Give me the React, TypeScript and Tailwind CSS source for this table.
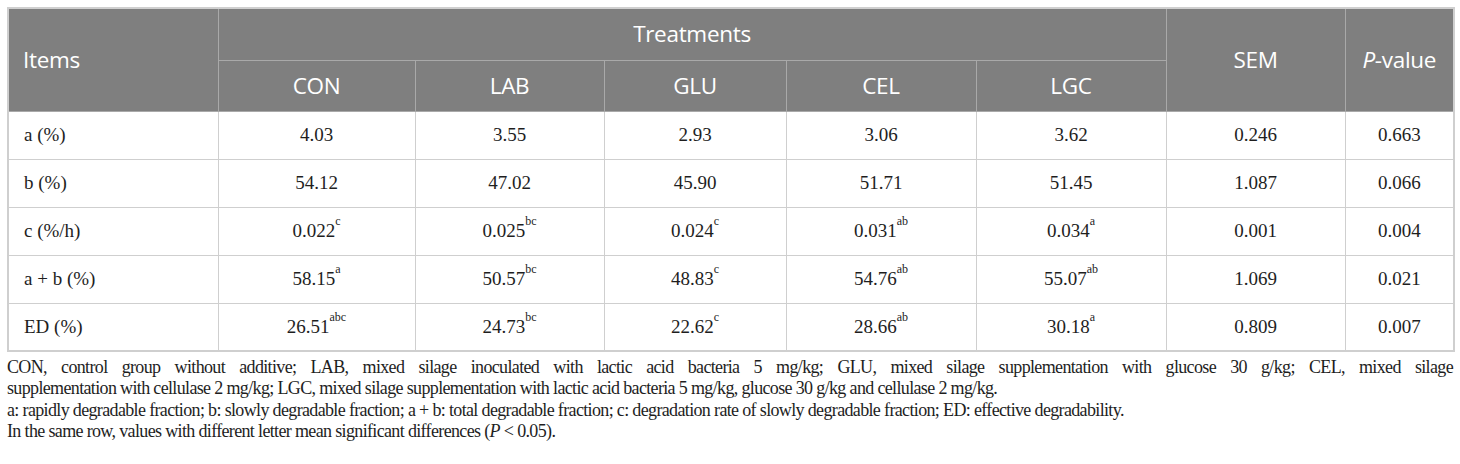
type Cell = { v: string; s?: string };

const rows: { item: string; cells: Cell[]; sem: string; p: string }[] = [
  {
    item: 'a (%)',
    cells: [{ v: '4.03' }, { v: '3.55' }, { v: '2.93' }, { v: '3.06' }, { v: '3.62' }],
    sem: '0.246',
    p: '0.663',
  },
  {
    item: 'b (%)',
    cells: [{ v: '54.12' }, { v: '47.02' }, { v: '45.90' }, { v: '51.71' }, { v: '51.45' }],
    sem: '1.087',
    p: '0.066',
  },
  {
    item: 'c (%/h)',
    cells: [
      { v: '0.022', s: 'c' },
      { v: '0.025', s: 'bc' },
      { v: '0.024', s: 'c' },
      { v: '0.031', s: 'ab' },
      { v: '0.034', s: 'a' },
    ],
    sem: '0.001',
    p: '0.004',
  },
  {
    item: 'a + b (%)',
    cells: [
      { v: '58.15', s: 'a' },
      { v: '50.57', s: 'bc' },
      { v: '48.83', s: 'c' },
      { v: '54.76', s: 'ab' },
      { v: '55.07', s: 'ab' },
    ],
    sem: '1.069',
    p: '0.021',
  },
  {
    item: 'ED (%)',
    cells: [
      { v: '26.51', s: 'abc' },
      { v: '24.73', s: 'bc' },
      { v: '22.62', s: 'c' },
      { v: '28.66', s: 'ab' },
      { v: '30.18', s: 'a' },
    ],
    sem: '0.809',
    p: '0.007',
  },
];

const groups = ['CON', 'LAB', 'GLU', 'CEL', 'LGC'];

export default function App() {
  const th = 'border border-[#a9a9a9] font-normal text-white';
  const td = 'border border-[#cfcfcf] h-[48px] text-center';

  return (
    <div className="w-[1460px] h-[464px] bg-white pt-[7px] px-[7px]">
      <table className="w-[1446px] table-fixed border-collapse border-2 border-[#cfcfcf]">
        <colgroup>
          <col className="w-[210px]" />
          <col className="w-[197px]" />
          <col className="w-[189px]" />
          <col className="w-[182px]" />
          <col className="w-[190px]" />
          <col className="w-[190px]" />
          <col className="w-[179px]" />
          <col className="w-[109px]" />
        </colgroup>
        <thead className="bg-[#7f7f7f] font-['Open_Sans',sans-serif] text-[22.5px] tracking-[-0.3px]">
          <tr className="h-[52px]">
            <th rowSpan={2} className={`${th} text-left pl-[14px]`}>
              Items
            </th>
            <th colSpan={5} className={`${th} text-center`}>
              Treatments
            </th>
            <th rowSpan={2} className={`${th} text-center`}>
              SEM
            </th>
            <th rowSpan={2} className={`${th} text-center`}>
              <i>P</i>-value
            </th>
          </tr>
          <tr className="h-[51px]">
            {groups.map((g) => (
              <th key={g} className={`${th} text-center`}>
                {g}
              </th>
            ))}
          </tr>
        </thead>
        <tbody className="font-['Liberation_Serif',serif] text-[19px] text-[#1e1e1e]">
          {rows.map((r) => (
            <tr key={r.item}>
              <td className={`${td} text-left pl-[15px]`}>{r.item}</td>
              {r.cells.map((c, i) => (
                <td key={i} className={td}>
                  {c.v}
                  {c.s && <sup className="text-[12px] align-[6px] leading-none">{c.s}</sup>}
                </td>
              ))}
              <td className={td}>{r.sem}</td>
              <td className={td}>{r.p}</td>
            </tr>
          ))}
        </tbody>
      </table>
      <div className="mt-[5px] font-['Liberation_Serif',serif] text-[18px] leading-[21.3px] tracking-[-0.65px] text-[#1e1e1e]">
        <p className="text-justify [text-align-last:justify] whitespace-nowrap">
          CON, control group without additive; LAB, mixed silage inoculated with lactic acid bacteria 5 mg/kg; GLU,
          mixed silage supplementation with glucose 30 g/kg; CEL, mixed silage
        </p>
        <p>
          supplementation with cellulase 2 mg/kg; LGC, mixed silage supplementation with lactic acid bacteria 5
          mg/kg, glucose 30 g/kg and cellulase 2 mg/kg.
        </p>
        <p>
          a: rapidly degradable fraction; b: slowly degradable fraction; a + b: total degradable fraction; c:
          degradation rate of slowly degradable fraction; ED: effective degradability.
        </p>
        <p>
          In the same row, values with different letter mean significant differences (<i>P</i> &lt; 0.05).
        </p>
      </div>
    </div>
  );
}
